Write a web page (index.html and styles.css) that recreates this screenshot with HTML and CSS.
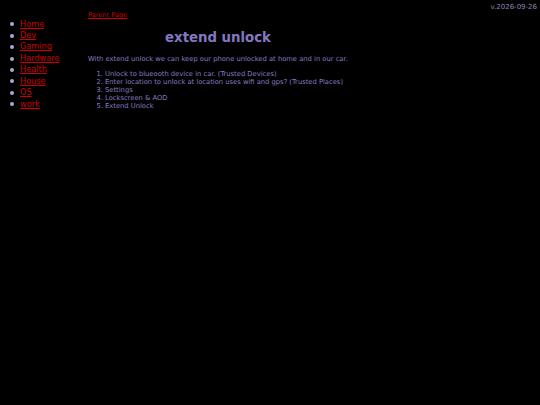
FILE: index.html
```html
<!DOCTYPE html>
<html>
<head>
<meta charset="utf-8">
<link rel="stylesheet" href="styles.css">
</head>
<body>
<div class="version">v.2026-09-26</div>
<div class="layout">
  <nav class="nav">
    <ul class="nav-list">
      <li><a href="#">Home</a></li>
      <li><a href="#">Dev</a></li>
      <li><a href="#">Gaming</a></li>
      <li><a href="#">Hardware</a></li>
      <li><a href="#">Health</a></li>
      <li><a href="#">House</a></li>
      <li><a href="#">OS</a></li>
      <li><a href="#">work</a></li>
    </ul>
  </nav>
  <main class="main">
    <a class="parent" href="#">Parent Page</a>
    <h1 class="title">extend unlock</h1>
    <p class="intro">With extend unlock we can keep our phone unlocked at home and in our car.</p>
    <ol class="steps">
      <li>Unlock to blueooth device in car. (Trusted Devices)</li>
      <li>Enter location to unlock at location uses wifi and gps? (Trusted Places)</li>
      <li>Settings</li>
      <li>Lockscreen &amp; AOD</li>
      <li>Extend Unlock</li>
    </ol>
  </main>
</div>
</body>
</html>
```
FILE: styles.css
```css
html, body {
  margin: 0;
  padding: 0;
  background: #000;
  height: 100%;
}
body {
  font-family: "DejaVu Sans", Verdana, sans-serif;
  color: #877cc0;
}
a {
  color: #cc0000;
}
.version {
  float: right;
  font-size: 7px;
  line-height: 14px;
  padding-right: 3px;
  color: #8a86b0;
}
.layout {
  display: flex;
  align-items: flex-start;
}
.nav {
  width: 88px;
  flex: none;
}
.nav-list {
  list-style: none;
  margin: 18.5px 0 0 0;
  padding-left: 10px;
  font-size: 8.2px;
  line-height: 11.43px;
}
.nav-list li {
  display: flex;
  align-items: center;
  gap: 6px;
}
.nav-list li::before {
  content: "";
  width: 4px;
  height: 4px;
  border-radius: 50%;
  background: #a8a8d8;
  flex: none;
}
.main {
  width: 260px;
  flex: none;
  display: flex;
  flex-direction: column;
}
.parent {
  margin-top: 12px;
  font-size: 6.6px;
  line-height: 7px;
  align-self: flex-start;
}
.title {
  margin: 11px 0 0 0;
  font-size: 13.3px;
  line-height: 16px;
  text-align: center;
  font-weight: bold;
  color: #8478c0;
}
.intro {
  margin: 9px 0 0 0;
  font-size: 6.75px;
  line-height: 8px;
  white-space: nowrap;
}
.steps {
  margin: 7px 0 0 0;
  padding-left: 17px;
  font-size: 6.75px;
  line-height: 8px;
  white-space: nowrap;
}
```
